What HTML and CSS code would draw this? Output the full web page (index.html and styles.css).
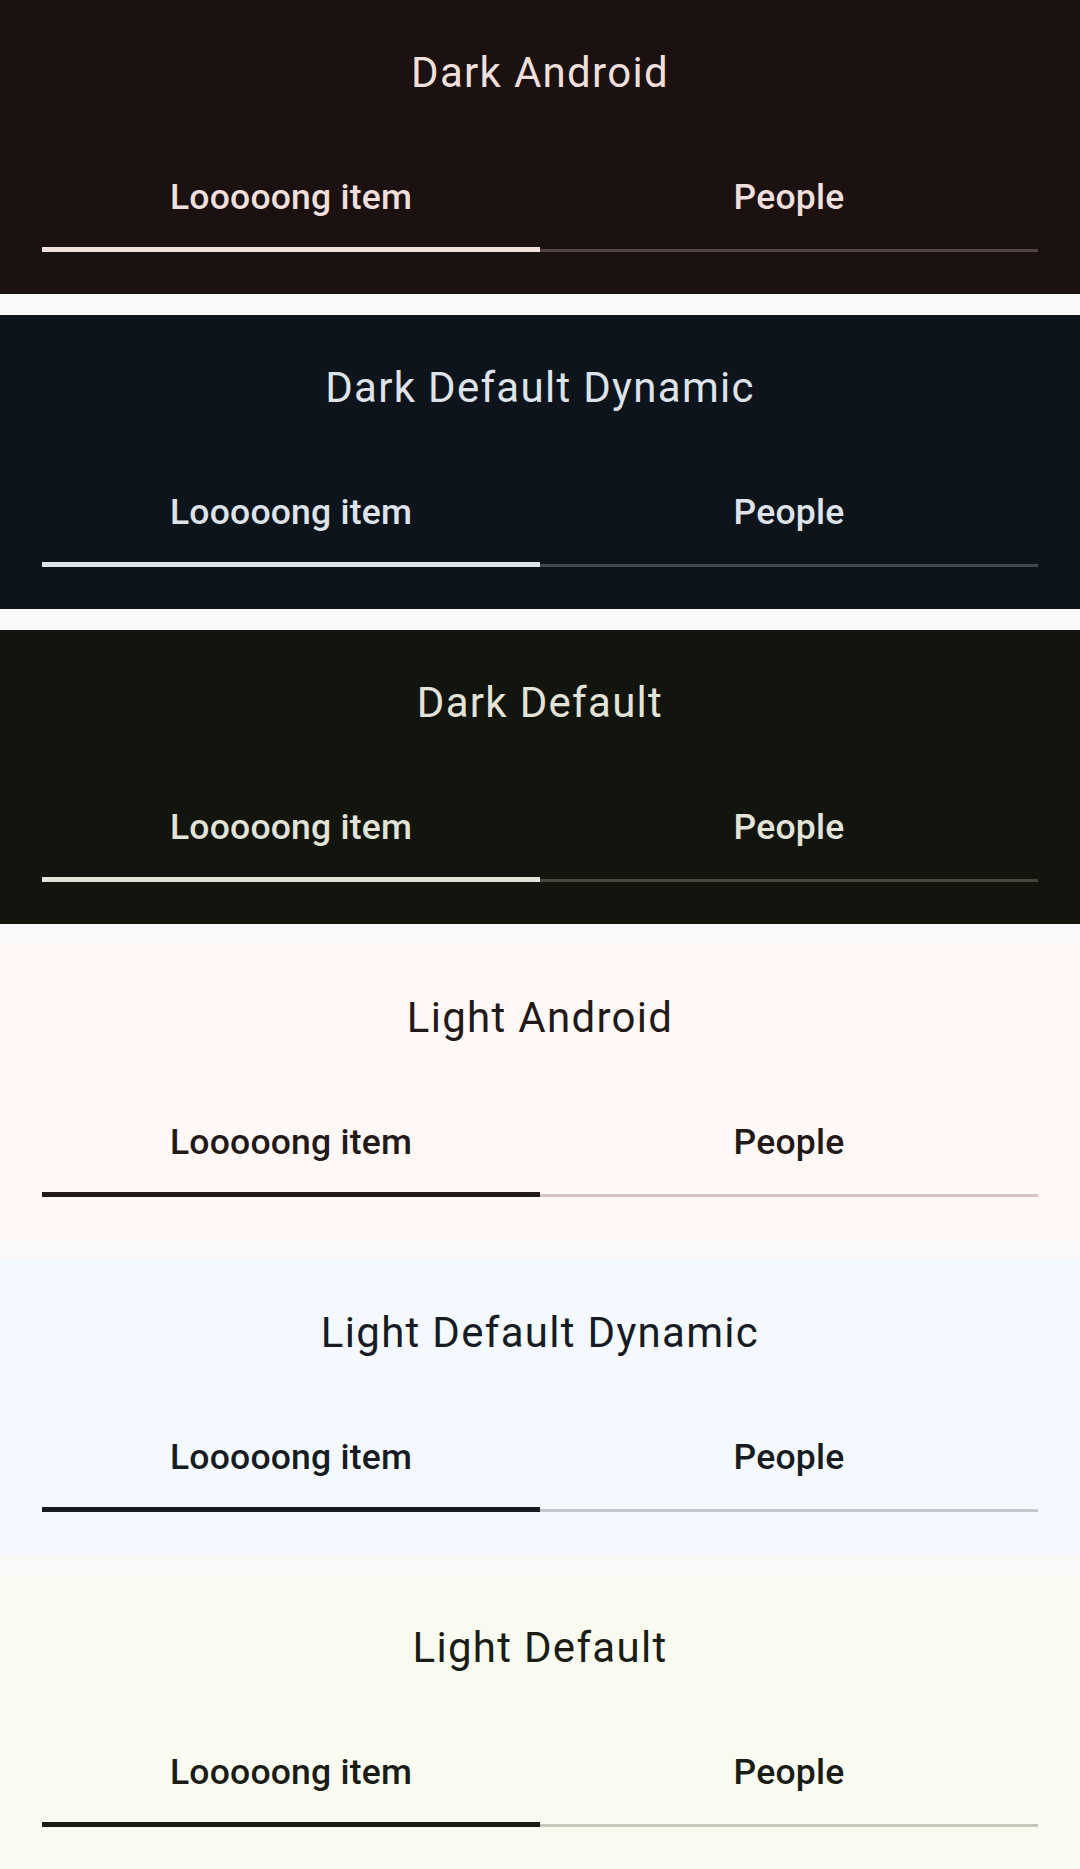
FILE: index.html
```html
<!DOCTYPE html>
<html>
<head>
<meta charset="utf-8">
<link rel="stylesheet" href="styles.css">
</head>
<body>
<div class="stack">
  <section class="theme dark-android">
    <h2 class="title">Dark Android</h2>
    <div class="tabs">
      <div class="tab active">Looooong item</div>
      <div class="tab">People</div>
    </div>
  </section>
  <section class="theme dark-dynamic">
    <h2 class="title">Dark Default Dynamic</h2>
    <div class="tabs">
      <div class="tab active">Looooong item</div>
      <div class="tab">People</div>
    </div>
  </section>
  <section class="theme dark-default">
    <h2 class="title">Dark Default</h2>
    <div class="tabs">
      <div class="tab active">Looooong item</div>
      <div class="tab">People</div>
    </div>
  </section>
  <section class="theme light-android">
    <h2 class="title">Light Android</h2>
    <div class="tabs">
      <div class="tab active">Looooong item</div>
      <div class="tab">People</div>
    </div>
  </section>
  <section class="theme light-dynamic">
    <h2 class="title">Light Default Dynamic</h2>
    <div class="tabs">
      <div class="tab active">Looooong item</div>
      <div class="tab">People</div>
    </div>
  </section>
  <section class="theme light-default">
    <h2 class="title">Light Default</h2>
    <div class="tabs">
      <div class="tab active">Looooong item</div>
      <div class="tab">People</div>
    </div>
  </section>
</div>
</body>
</html>
```

FILE: styles.css
```css
html, body {
  margin: 0;
  padding: 0;
}
body {
  background: #f9f9f9;
  font-family: Roboto, "Noto Sans", sans-serif;
  width: 1080px;
  height: 1869px;
  overflow: hidden;
}
.stack {
  display: flex;
  flex-direction: column;
  gap: 21px;
}
.theme {
  height: 294px;
  box-sizing: border-box;
  padding: 48px 42px 42px;
  display: flex;
  flex-direction: column;
  background: var(--bg);
  color: var(--fg);
}
.title {
  margin: 0;
  font-size: 42px;
  font-weight: 400;
  line-height: 50px;
  letter-spacing: 1.3px;
  text-align: center;
}
.tabs {
  margin-top: 28px;
  display: grid;
  grid-template-columns: 1fr 1fr;
}
.tab {
  height: 126px;
  box-sizing: border-box;
  padding-top: 49px;
  font-size: 35.5px;
  font-weight: 500;
  line-height: 44px;
  letter-spacing: 0.2px;
  text-align: center;
  box-shadow: inset 0 -3px 0 var(--divider);
}
.tab.active {
  box-shadow: inset 0 -5px 0 var(--fg);
}
.dark-android {
  --bg: #1a1110;
  --fg: #f1dfdb;
  --divider: #534341;
}
.dark-dynamic {
  --bg: #0e141b;
  --fg: #dee3ea;
  --divider: #42474e;
}
.dark-default {
  --bg: #12140e;
  --fg: #e3e3d8;
  --divider: #45483d;
}
.light-android {
  --bg: #fff8f6;
  --fg: #231918;
  --divider: #d8c2bf;
}
.light-dynamic {
  --bg: #f4f9ff;
  --fg: #171c22;
  --divider: #c2c7cf;
}
.light-default {
  --bg: #f9faf0;
  --fg: #1a1c16;
  --divider: #c5c8ba;
}
```
